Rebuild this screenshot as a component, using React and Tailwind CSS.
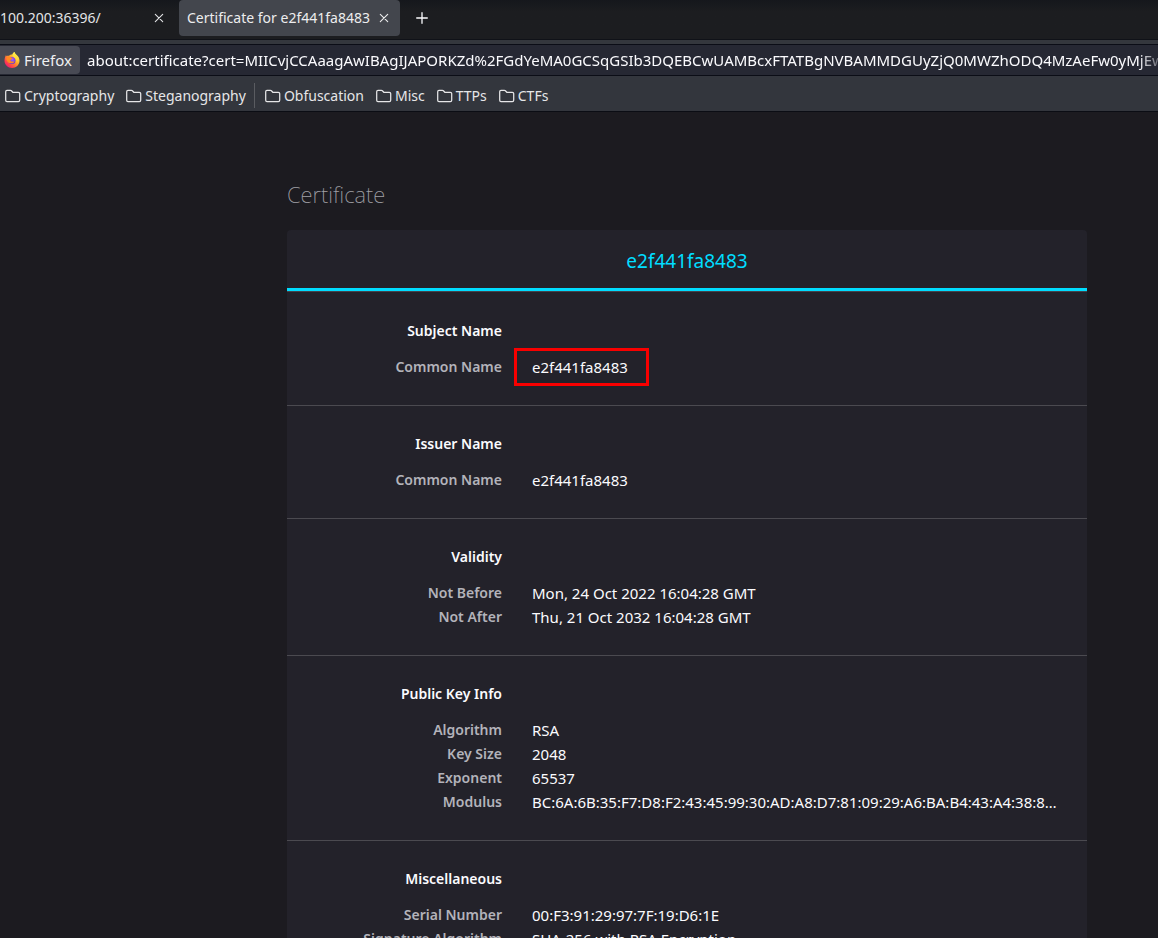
import React from "react";

const certificateUrl =
  "about:certificate?cert=MIICvjCCAaagAwIBAgIJAPORKZd%2FGdYeMA0GCSqGSIb3DQEBCwUAMBcxFTATBgNVBAMMDGUyZjQ0MWZhODQ4MzAeFw0yMjEwMjQxNjA0MjhaFw0zMjEw";

const bookmarkGroups = [
  ["Cryptography", "Steganography"],
  ["Obfuscation", "Misc", "TTPs", "CTFs"],
];

const sections = [
  { title: "Subject Name", rows: [["Common Name", "e2f441fa8483", true]] },
  { title: "Issuer Name", rows: [["Common Name", "e2f441fa8483"]] },
  {
    title: "Validity",
    rows: [
      ["Not Before", "Mon, 24 Oct 2022 16:04:28 GMT"],
      ["Not After", "Thu, 21 Oct 2032 16:04:28 GMT"],
    ],
  },
  {
    title: "Public Key Info",
    rows: [
      ["Algorithm", "RSA"],
      ["Key Size", "2048"],
      ["Exponent", "65537"],
      ["Modulus", "BC:6A:6B:35:F7:D8:F2:43:45:99:30:AD:A8:D7:81:09:29:A6:BA:B4:43:A4:38:8…"],
    ],
  },
  {
    title: "Miscellaneous",
    rows: [
      ["Serial Number", "00:F3:91:29:97:7F:19:D6:1E"],
      ["Signature Algorithm", "SHA-256 with RSA Encryption"],
    ],
  },
];

function CloseIcon() {
  return (
    <svg viewBox="0 0 10 10" className="size-[10px]" fill="none" stroke="currentColor" strokeWidth="1.1" strokeLinecap="round" aria-hidden="true">
      <path d="M1.3 1.3 8.7 8.7M8.7 1.3 1.3 8.7" />
    </svg>
  );
}

function FolderIcon() {
  return (
    <svg viewBox="0 0 16 16" className="size-4 shrink-0" fill="none" stroke="currentColor" strokeWidth="1.25" strokeLinejoin="round" aria-hidden="true">
      <path d="M.7 3.700c0-.8.6-1.300 1.300-1.300h3.400c.4 0 .7.1 1 .4l1.400 1.500h5.500c.8 0 1.400.5 1.400 1.300v6.700c0 .8-.6 1.300-1.400 1.300H2c-.7 0-1.300-.5-1.300-1.300z" />
    </svg>
  );
}

function FirefoxIcon() {
  return (
    <svg viewBox="0 0 32 32" className="size-4 shrink-0" aria-hidden="true">
      <defs>
        <linearGradient id="fx-body" x1="0.85" y1="0.1" x2="0.15" y2="0.95">
          <stop offset="0" stopColor="#fff44f" />
          <stop offset="0.35" stopColor="#ffb02e" />
          <stop offset="0.6" stopColor="#ff7139" />
          <stop offset="0.82" stopColor="#ff3750" />
          <stop offset="1" stopColor="#e31587" />
        </linearGradient>
        <radialGradient id="fx-core" cx="0.55" cy="0.35" r="0.7">
          <stop offset="0" stopColor="#a45cff" />
          <stop offset="0.6" stopColor="#7542e5" />
          <stop offset="1" stopColor="#592acb" />
        </radialGradient>
        <linearGradient id="fx-tail" x1="0.6" y1="0" x2="0.4" y2="1">
          <stop offset="0" stopColor="#fff44f" />
          <stop offset="0.6" stopColor="#ffd43a" />
          <stop offset="1" stopColor="#ff980e" />
        </linearGradient>
      </defs>
      <path fill="url(#fx-body)" d="M4 6c.3 1 .7 1.7 1.1 2.300C6.500 7.500 8.300 7.200 10 7.600 12 5.500 14.600 5 17 5.200 17.500 3 19 1 21 0c.6 3 3 4.500 5 6.500 3.500 3 5 7 5 11C31 25.500 24.300 32 16 32S1 25.700 1 17.600C1 13.400 2 9.700 4 6z" />
      <circle cx="16" cy="17" r="7" fill="url(#fx-core)" />
      <path fill="#ff8a22" d="M4.500 12c3-3.500 7-3.500 9.500-1 .8.8 2 1.300 3.500 1.400-.4 1.600-2.800 2-4 3-1.200 1.200-.4 3.400 1.800 3.800 2.200.3 3.700-1 5.700-.9-1.200 3.200-4 4.600-6.800 4.400C9 22.500 4.500 18 4.500 12z" />
      <path fill="url(#fx-tail)" d="M21 0c-3 1.600-4.500 4.500-3.700 7.300.7 2.300 4 3.200 5.600 6.200 1.700 3.300 1.400 7.200-.4 10.300 4-1.500 6.500-4.800 6.300-9-.2-3.500-2-6-4.300-8.300C22.500 4.500 21.300 2.500 21 0z" />
    </svg>
  );
}

function TabBar() {
  return (
    <div className="flex h-[39px] items-start overflow-hidden bg-linear-to-b from-[#15171c] to-[#1c1d20] to-30% text-sm">
      <div className="flex h-9 w-[179px] shrink-0 items-center justify-between pr-[15px] text-[#e3e4e6]">
        <button type="button">100.200:36396/</button>
        <button type="button" aria-label="Close tab 100.200:36396/">
          <CloseIcon />
        </button>
      </div>
      <div className="flex h-9 w-[221px] shrink-0 items-center justify-between rounded-sm bg-[#43464d] pr-[11px] pl-2 text-[#ededee]">
        <button type="button" aria-current="page" className="whitespace-nowrap">
          Certificate for e2f441fa8483
        </button>
        <button type="button" aria-label="Close tab Certificate for e2f441fa8483">
          <CloseIcon />
        </button>
      </div>
      <button type="button" aria-label="New tab" className="flex h-9 w-[43px] items-center justify-center text-[#fbfbfe]">
        <svg viewBox="0 0 12 12" className="size-3" fill="none" stroke="currentColor" strokeWidth="1.3" strokeLinecap="round" aria-hidden="true">
          <path d="M6 .7v10.600M.7 6h10.600" />
        </svg>
      </button>
    </div>
  );
}

function AddressBar() {
  return (
    <div className="border-t border-[#101218] bg-[#34373d] pt-1">
      <div className="flex h-8 items-center gap-[7px] border-y border-[#0b0d16] bg-[#262833]">
        <button type="button" className="flex h-7 w-20 shrink-0 items-center gap-1 rounded-r bg-[#484a54] pl-1 text-[#f0f0f2]">
          <FirefoxIcon />
          Firefox
        </button>
        <input
          type="text"
          aria-label="Address"
          defaultValue={certificateUrl}
          className="min-w-0 flex-1 bg-transparent mask-r-from-[calc(100%-20px)] mask-r-to-[calc(100%+10px)] text-[#fbfbfe] outline-none"
        />
      </div>
    </div>
  );
}

function Bookmarks() {
  return (
    <nav aria-label="Bookmarks" className="flex h-9 items-center border-b border-[#0b0d14] bg-[#33363d] pt-1 pl-[5px] text-sm text-[#e6e6e8]">
      {bookmarkGroups.map((group, index) => (
        <div key={group[0]} className="flex items-center">
          {index > 0 && <span className="mr-[10px] ml-2 h-[25px] w-px bg-[#5a5c61]" />}
          <ul className="flex items-center gap-3">
            {group.map((name) => (
              <li key={name}>
                <a href="#" className="flex items-center gap-[3px]">
                  <FolderIcon />
                  {name}
                </a>
              </li>
            ))}
          </ul>
        </div>
      ))}
    </nav>
  );
}

function Section({ title, rows }) {
  return (
    <section className="border-b border-[#4b4a50] py-[26px] leading-6">
      <h2 className="mb-3 w-[215px] text-right text-sm leading-6 font-semibold text-[#fbfbfe]">{title}</h2>
      <dl>
        {rows.map(([label, value, marked]) => (
          <div key={label} className="flex h-6 gap-[30px]">
            <dt className="w-[215px] shrink-0 text-right text-sm leading-6 font-semibold text-[#b3b3ba]">{label}</dt>
            <dd className="relative whitespace-nowrap text-[#fbfbfe]">
              {value}
              {marked && <span className="absolute -top-[7px] -left-[18px] h-[38px] w-[135px] border-3 border-[#f90000]" />}
            </dd>
          </div>
        ))}
      </dl>
    </section>
  );
}

export default function App() {
  return (
    <div className="flex h-screen flex-col overflow-hidden bg-[#1c1b20] font-['Noto_Sans',sans-serif] text-[15px]">
      <header className="shrink-0 leading-5">
        <TabBar />
        <AddressBar />
        <Bookmarks />
      </header>
      <main className="min-h-0 flex-1 overflow-hidden pt-[66px] pr-[71px] pl-[287px]">
        <h1 className="mb-5 text-[22px] leading-8 font-extralight text-[#a0a0a6]">Certificate</h1>
        <div className="rounded-t bg-[#23222a]">
          <button type="button" className="block h-[61px] w-full border-b-3 border-[#00ddff] pt-1 text-[19px] text-[#00ddff]">
            e2f441fa8483
          </button>
          <div className="border-t border-[#45444b] pt-px">
            {sections.map((section) => (
              <Section key={section.title} {...section} />
            ))}
          </div>
        </div>
      </main>
    </div>
  );
}
